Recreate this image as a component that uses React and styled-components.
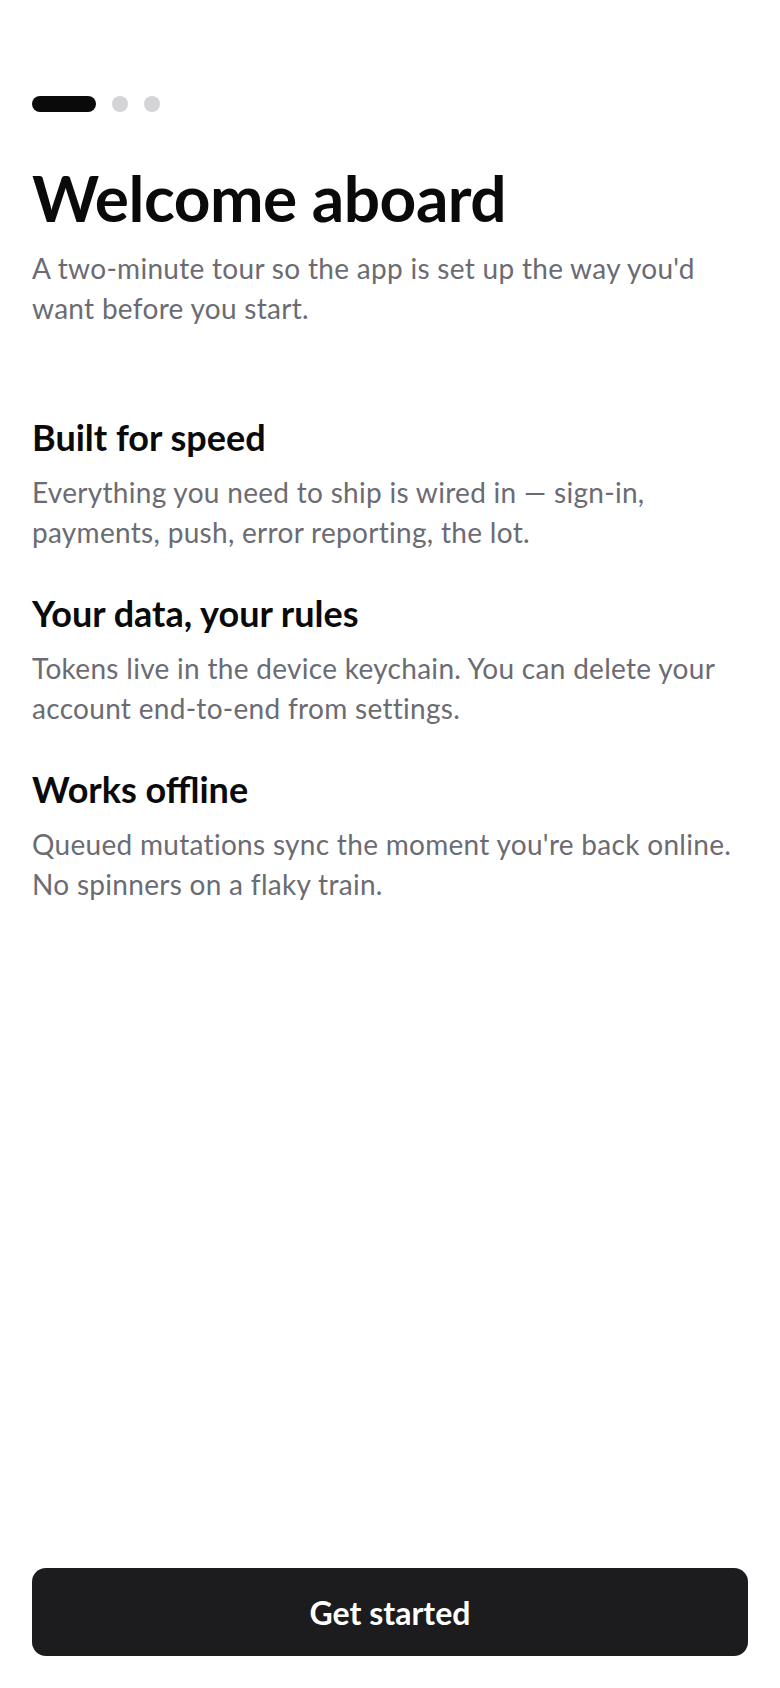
import React from "react";
import styled, { createGlobalStyle } from "styled-components";

const GlobalStyle = createGlobalStyle`
  * { box-sizing: border-box; }
  html, body { margin: 0; padding: 0; background: #ffffff; }
  body {
    font-family: Lato, "Open Sans", "Liberation Sans", sans-serif;
    -webkit-font-smoothing: antialiased;
  }
`;

const Screen = styled.main`
  min-height: 1688px;
  display: flex;
  flex-direction: column;
  padding: 96px 32px 32px;
  background: #ffffff;
`;

const Pager = styled.div`
  display: flex;
  align-items: center;
  gap: 16px;
  height: 16px;
`;

const PagerDot = styled.span`
  display: block;
  height: 16px;
  width: ${(p) => (p.$active ? "64px" : "16px")};
  border-radius: 8px;
  background: ${(p) => (p.$active ? "#0a0a0a" : "#d4d4d6")};
`;

const Hero = styled.header`
  margin-top: 51px;
  display: flex;
  flex-direction: column;
  gap: 15px;
`;

const Title = styled.h1`
  margin: 0;
  font-size: 64px;
  line-height: 70px;
  font-weight: 700;
  letter-spacing: -0.5px;
  color: #0a0a0a;
`;

const Lead = styled.p`
  margin: 0;
  font-size: 28px;
  line-height: 40px;
  font-weight: 400;
  letter-spacing: 0.3px;
  color: #6b6b73;
`;

const Features = styled.section`
  margin-top: 86px;
  display: flex;
  flex-direction: column;
  gap: 38px;
`;

const Feature = styled.article`
  display: flex;
  flex-direction: column;
  gap: 12px;
`;

const FeatureTitle = styled.h2`
  margin: 0;
  font-size: 36px;
  line-height: 46px;
  font-weight: 700;
  color: #0a0a0a;
`;

const FeatureText = styled.p`
  margin: 0;
  font-size: 28px;
  line-height: 40px;
  font-weight: 400;
  letter-spacing: 0.3px;
  color: #6b6b73;
`;

const Spacer = styled.div`
  flex: 1;
`;

const PrimaryButton = styled.button`
  width: 100%;
  height: 88px;
  border: none;
  border-radius: 14px;
  background: #1c1c1e;
  color: #ffffff;
  font-family: inherit;
  font-size: 32px;
  font-weight: 700;
  cursor: pointer;
  display: flex;
  align-items: center;
  justify-content: center;
`;

const features = [
  {
    title: "Built for speed",
    text: "Everything you need to ship is wired in — sign-in, payments, push, error reporting, the lot.",
  },
  {
    title: "Your data, your rules",
    text: "Tokens live in the device keychain. You can delete your account end-to-end from settings.",
  },
  {
    title: "Works offline",
    text: "Queued mutations sync the moment you're back online. No spinners on a flaky train.",
  },
];

export default function App() {
  return (
    <>
      <GlobalStyle />
      <Screen>
        <Pager aria-label="Step 1 of 3">
          <PagerDot $active />
          <PagerDot />
          <PagerDot />
        </Pager>
        <Hero>
          <Title>Welcome aboard</Title>
          <Lead>
            A two-minute tour so the app is set up the way you'd want before
            you start.
          </Lead>
        </Hero>
        <Features>
          {features.map((f) => (
            <Feature key={f.title}>
              <FeatureTitle>{f.title}</FeatureTitle>
              <FeatureText>{f.text}</FeatureText>
            </Feature>
          ))}
        </Features>
        <Spacer />
        <PrimaryButton type="button">Get started</PrimaryButton>
      </Screen>
    </>
  );
}
